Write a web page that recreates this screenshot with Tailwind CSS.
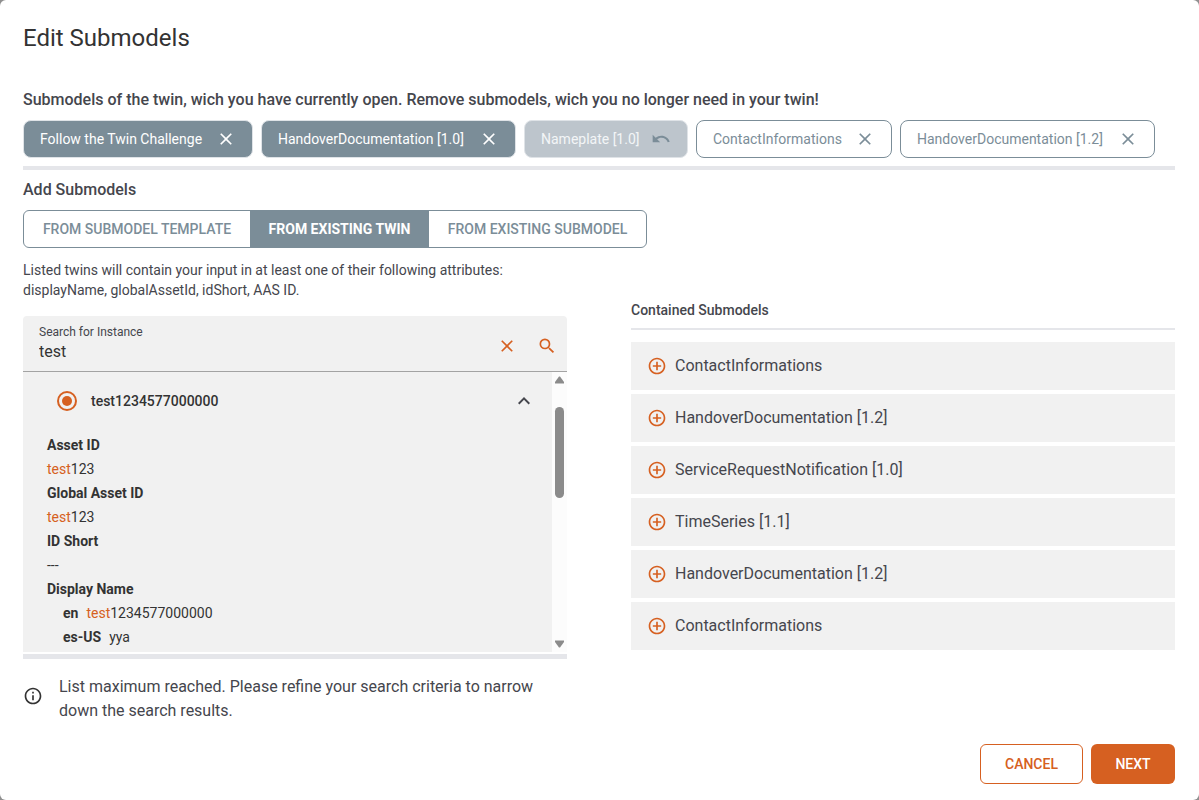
<!DOCTYPE html>
<html lang="en">
<head>
    <meta charset="UTF-8">
    <meta name="viewport" content="width=device-width, initial-scale=1.0">
    <script src="https://cdn.jsdelivr.net/npm/@tailwindcss/browser@4"></script>
    <title>Edit Submodels</title>
</head>
<body class="bg-[#8f8f8f] font-[Roboto,sans-serif] text-sm text-[#45464d]">
    <!-- shared icons -->
    <svg class="hidden">
        <symbol id="close" viewBox="0 0 24 24"><path d="M19 6.41 17.59 5 12 10.59 6.41 5 5 6.41 10.59 12 5 17.59 6.41 19 12 13.41 17.59 19 19 17.59 13.41 12z"/></symbol>
        <symbol id="undo" viewBox="0 0 24 24"><path d="M12.5 8c-2.65 0-5.05.99-6.9 2.6L2 7v9h9l-3.62-3.62c1.39-1.16 3.16-1.88 5.12-1.88 3.54 0 6.55 2.31 7.6 5.5l2.37-.78C21.08 11.03 17.15 8 12.5 8z"/></symbol>
        <symbol id="add" viewBox="0 0 24 24"><path d="M13 7h-2v4H7v2h4v4h2v-4h4v-2h-4V7zm-1-5C6.48 2 2 6.48 2 12s4.48 10 10 10 10-4.48 10-10S17.52 2 12 2zm0 18c-4.41 0-8-3.59-8-8s3.59-8 8-8 8 3.59 8 8-3.59 8-8 8z"/></symbol>
    </svg>

    <main role="dialog" aria-labelledby="title" class="flex min-h-screen flex-col rounded-md bg-white pr-6 pb-4 pl-[23px]">
        <h1 id="title" class="pt-[22px] text-2xl/8 text-[#333]">Edit Submodels</h1>

        <h2 class="mt-[34px] text-base/6 font-medium">Submodels of the twin, wich you have currently open. Remove submodels, wich you no longer need in your twin!</h2>
        <div class="mt-2 flex flex-wrap gap-2">
            <button class="flex h-[38px] min-w-[230px] items-center justify-between gap-2 rounded-lg border border-[#dfe3e7] bg-[#7b8d98] px-4 text-white">Follow the Twin Challenge <svg class="size-5 fill-current"><use href="#close"/></svg></button>
            <button class="flex h-[38px] min-w-[255px] items-center justify-between gap-2 rounded-lg border border-[#dfe3e7] bg-[#7b8d98] px-4 text-white">HandoverDocumentation [1.0] <svg class="size-5 fill-current"><use href="#close"/></svg></button>
            <button class="flex h-[38px] min-w-[164px] items-center justify-between gap-2 rounded-lg border border-[#dfe3e7] bg-[#bdc5cc] px-4 text-[#f3f5f7]">Nameplate [1.0] <svg class="size-5 fill-[#7b8d98]"><use href="#undo"/></svg></button>
            <button class="flex h-[38px] min-w-[196px] items-center justify-between gap-2 rounded-lg border border-[#7b8d98] px-4 text-[#7b8d98]">ContactInformations <svg class="size-5 fill-current"><use href="#close"/></svg></button>
            <button class="flex h-[38px] min-w-[255px] items-center justify-between gap-2 rounded-lg border border-[#7b8d98] px-4 text-[#7b8d98]">HandoverDocumentation [1.2] <svg class="size-5 fill-current"><use href="#close"/></svg></button>
        </div>
        <hr class="mt-2 border-t-4 border-[#e5e6ea]">

        <h2 class="mt-2 text-base/6 font-medium">Add Submodels</h2>
        <div class="mt-2 flex h-[38px] self-start overflow-hidden rounded-md border border-[#7b8d98] font-medium text-[#7b8d98]">
            <button class="min-w-[226px] px-4">FROM SUBMODEL TEMPLATE</button>
            <button class="min-w-[179px] bg-[#7b8d98] px-4 font-bold text-white">FROM EXISTING TWIN</button>
            <button class="min-w-[217px] px-4">FROM EXISTING SUBMODEL</button>
        </div>

        <div class="mt-3 grid grid-cols-2 gap-16">
            <section>
                <p>Listed twins will contain your input in at least one of their following attributes:<br>displayName, globalAssetId, idShort, AAS ID.</p>

                <div class="mt-4 flex h-14 items-center rounded-t border-b border-[#a3a3a3] bg-[#f1f1f1] pr-2.5 pl-4">
                    <div class="min-w-0 flex-1">
                        <label for="search" class="block text-xs/4">Search for Instance</label>
                        <input id="search" type="text" value="test" class="block w-full text-base/6 text-[#333] outline-none">
                    </div>
                    <button aria-label="Clear" class="mt-1 flex size-10 items-center justify-center fill-[#d66021]"><svg class="size-5"><use href="#close"/></svg></button>
                    <button aria-label="Search" class="mt-1 flex h-10 w-[30px] items-center justify-end fill-[#d66021]">
                        <svg viewBox="0 0 24 24" class="size-5"><path d="M15.5 14h-.79l-.28-.27A6.471 6.471 0 0 0 16 9.5 6.5 6.5 0 1 0 9.5 16c1.61 0 3.09-.59 4.23-1.57l.27.28v.79l5 4.99L20.49 19l-4.99-5zm-6 0C7.01 14 5 11.99 5 9.5S7.01 5 9.5 5 14 7.01 14 9.5 11.99 14 9.5 14z"/></svg>
                    </button>
                </div>

                <div class="flex h-[280px] text-[#333]">
                    <div class="flex-1 overflow-hidden bg-[#f1f1f1] pl-6">
                        <div class="flex h-[58px] items-center pr-4 pl-[10px]">
                            <input id="twin" type="radio" name="twin" checked class="grid size-5 appearance-none place-content-center rounded-full border-2 border-[#d66021] before:size-2.5 before:rounded-full checked:before:bg-[#d66021]">
                            <label for="twin" class="flex-1 pl-[14px] font-medium">test1234577000000</label>
                            <button aria-label="Collapse"><svg viewBox="0 0 24 24" class="size-6 fill-[#45464d]"><path d="m12 8-6 6 1.410 1.410L12 10.830l4.590 4.580L18 14z"/></svg></button>
                        </div>
                        <dl class="pt-[3px] leading-6">
                            <dt class="font-bold">Asset ID</dt>
                            <dd><span class="text-[#d66021]">test</span>123</dd>
                            <dt class="font-bold">Global Asset ID</dt>
                            <dd><span class="text-[#d66021]">test</span>123</dd>
                            <dt class="font-bold">ID Short</dt>
                            <dd>---</dd>
                            <dt class="font-bold">Display Name</dt>
                            <dd class="pl-4"><b class="pr-2">en</b><span class="text-[#d66021]">test</span>1234577000000</dd>
                            <dd class="pl-4"><b class="pr-2">es-US</b>yya</dd>
                        </dl>
                    </div>
                    <!-- scrollbar -->
                    <div class="flex w-[15px] flex-col items-center bg-[#fcfcfc] py-1" aria-hidden="true">
                        <svg viewBox="0 0 9 8" class="h-2 w-[9px] fill-[#8b8b8b]"><path d="M4 .5h1L9 6v1.5H0V6z"/></svg>
                        <div class="mt-[23px] h-[91px] w-[9px] rounded-full bg-[#8b8b8b]"></div>
                        <svg viewBox="0 0 9 8" class="mt-auto h-2 w-[9px] fill-[#8b8b8b]"><path d="M0 .5h9V2L5 7.500H4L0 2z"/></svg>
                    </div>
                </div>
                <hr class="mt-0.5 border-t-[5px] border-[#e5e6ea]">

                <div class="mt-4 flex items-start gap-4">
                    <svg viewBox="0 0 24 24" class="mt-[11px] size-5 shrink-0 fill-[#333]"><path d="M11 7h2v2h-2zm0 4h2v6h-2zm1-9C6.480 2 2 6.480 2 12s4.480 10 10 10 10-4.480 10-10S17.520 2 12 2zm0 18c-4.410 0-8-3.590-8-8s3.590-8 8-8 8 3.590 8 8-3.590 8-8 8z"/></svg>
                    <p class="text-base/6">List maximum reached. Please refine your search criteria to narrow<br>down the search results.</p>
                </div>
            </section>

            <section class="pt-10">
                <h3 class="font-medium">Contained Submodels</h3>
                <hr class="mt-2 border-t-2 border-[#e5e6ea]">
                <ul class="mt-3 space-y-1 text-base">
                    <li class="flex h-12 items-center gap-2 bg-[#f1f1f1] px-4"><button aria-label="Add ContactInformations"><svg class="size-5 fill-[#d66021]"><use href="#add"/></svg></button>ContactInformations</li>
                    <li class="flex h-12 items-center gap-2 bg-[#f1f1f1] px-4"><button aria-label="Add HandoverDocumentation"><svg class="size-5 fill-[#d66021]"><use href="#add"/></svg></button>HandoverDocumentation [1.2]</li>
                    <li class="flex h-12 items-center gap-2 bg-[#f1f1f1] px-4"><button aria-label="Add ServiceRequestNotification"><svg class="size-5 fill-[#d66021]"><use href="#add"/></svg></button>ServiceRequestNotification [1.0]</li>
                    <li class="flex h-12 items-center gap-2 bg-[#f1f1f1] px-4"><button aria-label="Add TimeSeries"><svg class="size-5 fill-[#d66021]"><use href="#add"/></svg></button>TimeSeries [1.1]</li>
                    <li class="flex h-12 items-center gap-2 bg-[#f1f1f1] px-4"><button aria-label="Add HandoverDocumentation"><svg class="size-5 fill-[#d66021]"><use href="#add"/></svg></button>HandoverDocumentation [1.2]</li>
                    <li class="flex h-12 items-center gap-2 bg-[#f1f1f1] px-4"><button aria-label="Add ContactInformations"><svg class="size-5 fill-[#d66021]"><use href="#add"/></svg></button>ContactInformations</li>
                </ul>
            </section>
        </div>

        <footer class="mt-auto flex justify-end gap-2 pt-4 font-medium">
            <button class="h-10 min-w-[103px] rounded-md border border-[#d66021] px-6 text-[#d66021]">CANCEL</button>
            <button class="h-10 min-w-[84px] rounded-md bg-[#d66021] px-6 text-white">NEXT</button>
        </footer>
    </main>
</body>
</html>
